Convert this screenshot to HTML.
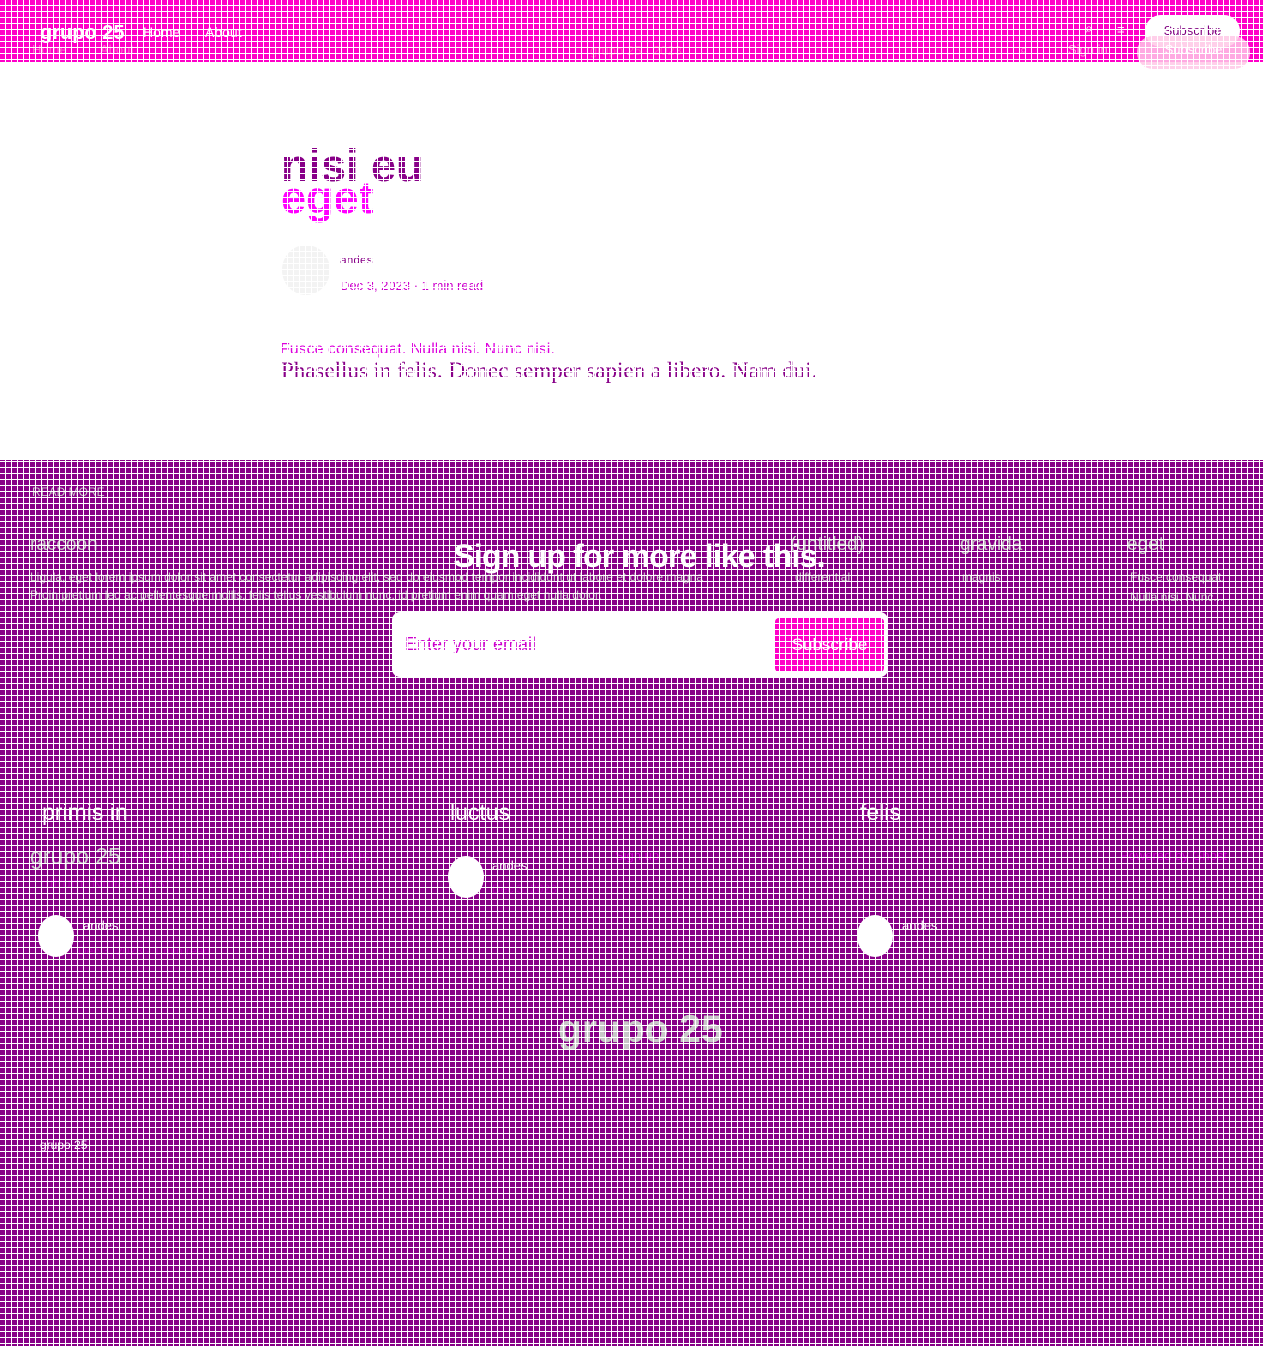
<!DOCTYPE html>
<html><head><meta charset="utf-8"><style>
*{margin:0;padding:0;box-sizing:border-box}
html,body{width:1263px;height:1346px;overflow:hidden;background:#fff;font-family:"Liberation Sans",sans-serif;position:relative}
.a{position:absolute;white-space:nowrap}
#hdr{position:absolute;left:0;top:0;width:1263px;height:62px;background:#ff00c8}
#ftr{position:absolute;left:0;top:460px;width:1263px;height:886px;background:#880088}
#grid{position:absolute;left:0;top:0;width:1263px;height:1346px;pointer-events:none;
background-image:repeating-linear-gradient(90deg,transparent 0 5px,#fff 5px 6px),repeating-linear-gradient(180deg,transparent 0 5px,#fff 5px 6px);z-index:5}
.g{color:#c8c8c8}
.circ{position:absolute;width:36px;height:42px;border-radius:50%;background:#fff}
</style></head><body>
<div id="hdr"></div>
<div id="ftr"></div>

<div class="a" style="left:40px;top:22px;font-size:20px;font-weight:bold;color:#fff">grupo 25</div>
<div class="a" style="left:143px;top:24px;font-size:14px;color:#fff">Home</div>
<div class="a" style="left:205px;top:24px;font-size:14px;color:#fff">About</div>
<div class="a" style="left:32px;top:42px;font-size:13px;color:#f6c">Home</div>
<div class="a" style="left:100px;top:42px;font-size:13px;color:#f6c">About</div>
<div class="a" style="left:590px;top:43px;font-size:13px;color:#f4b">grupo 25 · 2023</div>
<div class="a" style="left:1085px;top:20px;font-size:14px;color:#fff">⌕</div>
<div class="a" style="left:1117px;top:22px;font-size:13px;color:#fff">≡</div>
<div class="a" style="left:1020px;top:42px;font-size:13px;color:#f9d">⌕</div>
<div class="a" style="left:1068px;top:42px;font-size:13px;color:#f9d">Sign in</div>
<div class="a" style="left:1145px;top:15px;width:95px;height:32px;border-radius:16px;background:#fff;color:#800080;font-size:13px;text-align:center;line-height:32px">Subscribe</div>
<div class="a" style="left:1137px;top:36px;width:113px;height:33px;border-radius:16px;background:rgba(255,200,230,.85);color:#fff;font-size:13px;text-align:center;line-height:28px">Subscribe</div>

<div class="a" style="left:281px;top:140px;font-size:45px;font-weight:bold;color:#880088">nisi eu</div>
<div class="a" style="left:281px;top:172px;font-size:45px;font-weight:bold;color:#ff00ff">eget</div>
<div class="a" style="left:282px;top:245px;width:48px;height:50px;border-radius:50%;background:#f3f3f3"></div>
<div class="a" style="left:340px;top:253px;font-size:12px;color:#880088">andes</div>
<div class="a" style="left:340px;top:278px;font-size:13px;color:#c0c">Dec 3, 2023 · 1 min read</div>
<div class="a" style="left:280px;top:341px;font-size:16px;color:#d0d">Fusce consequat. Nulla nisi. Nunc nisi.</div>
<div class="a" style="left:281px;top:358px;font-size:23px;color:#880088;font-family:'Liberation Serif',serif">Phasellus in felis. Donec semper sapien a libero. Nam dui.</div>

<div class="a g" style="left:32px;top:485px;font-size:12px">READ MORE</div>
<div class="a g" style="left:30px;top:534px;font-size:19px">raccoon</div>
<div class="a g" style="left:30px;top:570px;font-size:12px">Ligula, eget lorem ipsum dolor sit amet consectetur adipiscing elit, sed do eiusmod tempor incididunt ut labore et dolore magna</div>
<div class="a g" style="left:30px;top:588px;font-size:12px">Proin pretium leo ac pellentesque mollis, felis tellus vestibulum nunc, id pretium enim quam eget nulla dolor.</div>
<div class="a g" style="left:790px;top:534px;font-size:19px">(untitled)</div>
<div class="a g" style="left:795px;top:570px;font-size:12px">differential</div>
<div class="a g" style="left:960px;top:534px;font-size:19px">gravida</div>
<div class="a g" style="left:962px;top:570px;font-size:12px">magnis</div>
<div class="a g" style="left:1127px;top:534px;font-size:19px">eget</div>
<div class="a g" style="left:1130px;top:570px;font-size:12px">Fusce consequat.</div>
<div class="a g" style="left:1130px;top:590px;font-size:12px">Nulla nisi. Nunc...</div>
<div class="a" style="left:0;width:1278px;text-align:center;top:538px;font-size:32px;font-weight:bold;color:#fff;letter-spacing:-0.8px">Sign up for more like this.</div>

<div class="a" style="left:392px;top:612px;width:496px;height:65px;border-radius:8px;background:#fff"></div>
<div class="a" style="left:405px;top:634px;font-size:18px;color:#c0c">Enter your email</div>
<div class="a" style="left:775px;top:618px;width:109px;height:54px;border-radius:4px;background:#ff00c8;color:#fff;font-size:17px;text-align:center;line-height:54px">Subscribe</div>

<div class="a" style="left:42px;top:799px;font-size:23px;color:#fff">primis in</div>
<div class="a" style="left:450px;top:799px;font-size:23px;color:#fff">luctus</div>
<div class="a" style="left:860px;top:799px;font-size:23px;color:#fff">felis</div>
<div class="a g" style="left:30px;top:843px;font-size:23px">grupo 25</div>
<div class="a" style="left:135px;top:848px;font-size:15px;color:#a0a">m. Morbi nonummy. Nam dui luctus</div>
<div class="a" style="left:40px;top:875px;font-size:15px;color:#a0a">rutrum. Nulla tellus.</div>
<div class="a" style="left:615px;top:848px;font-size:13px;color:#c0c">Sign up</div>
<div class="a" style="left:1120px;top:848px;font-size:13px;color:#c0c">Powered by Ghost</div>
<div class="circ" style="left:38px;top:915px"></div>
<div class="a" style="left:83px;top:918px;font-size:13px;color:#fff">andes</div>
<div class="a" style="left:78px;top:944px;font-size:12px;color:#a0a">Dec 3, 2023 · 1 min read</div>
<div class="circ" style="left:448px;top:856px"></div>
<div class="a" style="left:492px;top:858px;font-size:13px;color:#fff">andes</div>
<div class="a" style="left:492px;top:882px;font-size:12px;color:#a0a">Dec 3, 2023</div>
<div class="circ" style="left:857px;top:915px"></div>
<div class="a" style="left:902px;top:918px;font-size:13px;color:#fff">andes</div>
<div class="a g" style="left:558px;top:1008px;font-size:39px;font-weight:bold">grupo 25</div>
<div class="a" style="left:40px;top:1138px;font-size:12px;color:#fff">grupo 25</div>

<div id="grid"></div>
</body></html>
